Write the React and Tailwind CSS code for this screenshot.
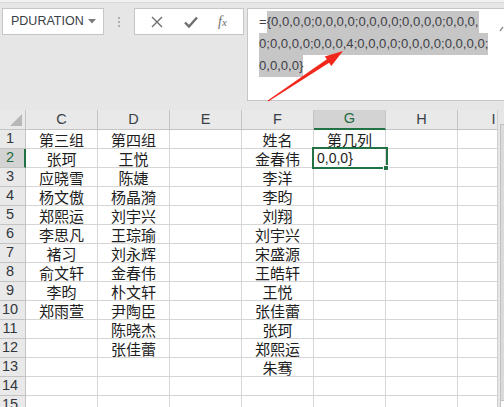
import React from "react";

const C = ["第三组","张珂","应晓雪","杨文傲","郑熙运","李思凡","褚习","俞文轩","李昀","郑雨萱","","","","",""];
const D = ["第四组","王悦","陈婕","杨晶漪","刘宇兴","王琮瑜","刘永辉","金春伟","朴文轩","尹陶臣","陈晓杰","张佳蕾","","",""];
const F = ["姓名","金春伟","李洋","李昀","刘翔","刘宇兴","宋盛源","王皓轩","王悦","张佳蕾","张珂","郑熙运","朱骞","",""];
const G = ["第几列","","","","","","","","","","","","","",""];
const cols = ["C","D","E","F","G","H","I"];

const cjk = { fontFamily: '"Noto Sans CJK SC", "Noto Sans", sans-serif' };
const lat = { fontFamily: '"Liberation Sans", Arial, sans-serif' };

function Cell({ text, children }) {
  return (
    <div className="relative h-[19px] border-r border-b border-[#d6d6d6] bg-white flex items-center justify-center text-[15px] leading-none text-[#1e1e1e] whitespace-nowrap" style={cjk}>
      {text}
      {children}
    </div>
  );
}

export default function App() {
  const rows = Array.from({ length: 15 }, (_, i) => i);
  return (
    <div className="relative w-[504px] h-[407px] overflow-hidden bg-[#e6e6e6]">
      {/* formula area */}
      <div className="h-[110px] flex flex-col">
        <div className="h-[3px] bg-[#f1f1f1] border-b border-[#dadada]" />
        <div className="flex items-start pt-[5px]">
          <div className="ml-[2px] w-[102px] h-[27px] bg-white border border-[#c6c6c6] flex items-center justify-between pl-[8px] pr-[7px]">
            <span className="text-[12.5px] text-[#3b3f47]" style={lat}>PDURATION</span>
            <svg width="8" height="5" viewBox="0 0 8 5"><path d="M0 0 L8 0 L4 4.5 Z" fill="#7a7a7a" /></svg>
          </div>
          <div className="w-[30px] h-[27px] flex flex-col items-center justify-center gap-[2px]">
            <div className="w-[2px] h-[2px] bg-[#b0b0b0]" />
            <div className="w-[2px] h-[2px] bg-[#b0b0b0]" />
            <div className="w-[2px] h-[2px] bg-[#b0b0b0]" />
          </div>
          <div className="w-[110px] h-[27px] bg-white border border-[#c6c6c6] flex items-center justify-around px-[6px]">
            <svg width="12" height="12" viewBox="0 0 12 12"><path d="M1 1 L11 11 M11 1 L1 11" stroke="#6e6e6e" strokeWidth="1.4" /></svg>
            <svg width="14" height="12" viewBox="0 0 14 12"><path d="M1 6.5 L5 10.5 L13 1.5" stroke="#6e6e6e" strokeWidth="2.4" fill="none" /></svg>
            <span className="text-[14px] italic text-[#6e6e6e] leading-none" style={{ fontFamily: '"Liberation Serif", serif' }}>f<span className="text-[11px]">x</span></span>
          </div>
          <div className="relative ml-[3px] flex-1 h-[93px] bg-white border-y border-l border-[#c6c6c6] pt-[2px] pl-[11px] text-[13.1px] text-[#3f3f46]" style={lat}>
            <div className="leading-[22px] h-[22px] whitespace-nowrap">=<span className="inline-block bg-[#c6c6c6] h-[22px]">{"{0,0,0,0;0,0,0,0;0,0,0,0;0,0,0,0;0,0,0,"}</span></div>
            <div className="leading-[22px] h-[22px] whitespace-nowrap"><span className="inline-block bg-[#c6c6c6] h-[22px]">0;0,0,0,0;0,0,0,4;0,0,0,0;0,0,0,0;0,0,0,0;</span></div>
            <div className="leading-[22px] h-[22px] whitespace-nowrap"><span className="inline-block bg-[#c6c6c6] h-[22px]">{"0,0,0,0}"}</span></div>
            <svg className="absolute right-0 top-[17px]" width="5" height="6" viewBox="0 0 5 6"><path d="M1 5 L4 1" stroke="#8a8a8a" strokeWidth="1.3" /></svg>
          </div>
        </div>
      </div>

      {/* grid */}
      <div className="flex h-[297px]">
        <div className="w-[497px] overflow-hidden">
          <div className="grid grid-cols-[26px_repeat(7,72px)] w-[530px]">
            {/* header row */}
            <div className="relative h-[20px] bg-[#e9e9e9] border-r border-b border-[#c4c4c4]">
              <svg className="absolute right-[3px] bottom-[3px]" width="12" height="12" viewBox="0 0 12 12"><path d="M12 0 L12 12 L0 12 Z" fill="#b8b8b8" /></svg>
            </div>
            {cols.map((c) => (
              <div key={c} className={c === "G"
                ? "h-[20px] bg-[#d3d3d3] border-r border-[#c4c4c4] border-b-2 border-b-[#217346] flex items-center justify-center text-[14.5px] text-[#1f6a40]"
                : "h-[20px] bg-[#e9e9e9] border-r border-b border-[#c4c4c4] flex items-center justify-center text-[14.5px] text-[#3a3f48]"} style={lat}>{c}</div>
            ))}
            {rows.map((i) => (
              <React.Fragment key={i}>
                <div className={i === 1
                  ? "h-[19px] bg-[#d3d3d3] border-b border-[#c4c4c4] border-r-2 border-r-[#217346] flex items-center justify-center pr-[4px] text-[14.5px] text-[#1f6a40]"
                  : "h-[19px] bg-[#e9e9e9] border-r border-b border-[#c4c4c4] flex items-center justify-center pr-[5px] text-[14.5px] text-[#33363d]"} style={lat}>{i + 1}</div>
                <Cell text={C[i]} />
                <Cell text={D[i]} />
                <Cell text="" />
                <Cell text={F[i]} />
                {i === 1 ? (
                  <div className="relative z-10 h-[19px] border-r border-b border-[#d6d6d6] bg-white flex items-center pl-[3px] text-[14px] text-[#1e1e1e]" style={lat}>
                    {"0,0,0}"}
                    <div className="absolute -left-[2px] -top-[2px] w-[76px] h-[22px] border-2 border-[#217346]" />
                    <div className="absolute -right-[4px] -bottom-[4px] w-[6px] h-[6px] bg-[#217346] border border-white" />
                  </div>
                ) : (
                  <Cell text={G[i]} />
                )}
                <Cell text="" />
                <Cell text="" />
              </React.Fragment>
            ))}
          </div>
        </div>
        <div className="w-[7px] bg-[#e6e6e6] border-l border-[#cfcfcf] flex flex-col">
          <div className="h-[14px]" />
          <div className="ml-[2px] h-[276px] bg-[#dadada] border-l border-t border-[#c2c2c2]" />
          <div className="ml-[2px] flex-1 bg-white border-l border-t border-[#c2c2c2]" />
        </div>
      </div>

      {/* red arrow */}
      <svg className="absolute left-0 top-0 pointer-events-none" width="504" height="407" viewBox="0 0 504 407">
        <polygon
          points="268.3,101.4 329.1,62.7 331.3,66.0 343,51 324.7,56.5 326.9,59.3 267.7,100.6"
          fill="#f2271b"
        />
      </svg>
    </div>
  );
}
